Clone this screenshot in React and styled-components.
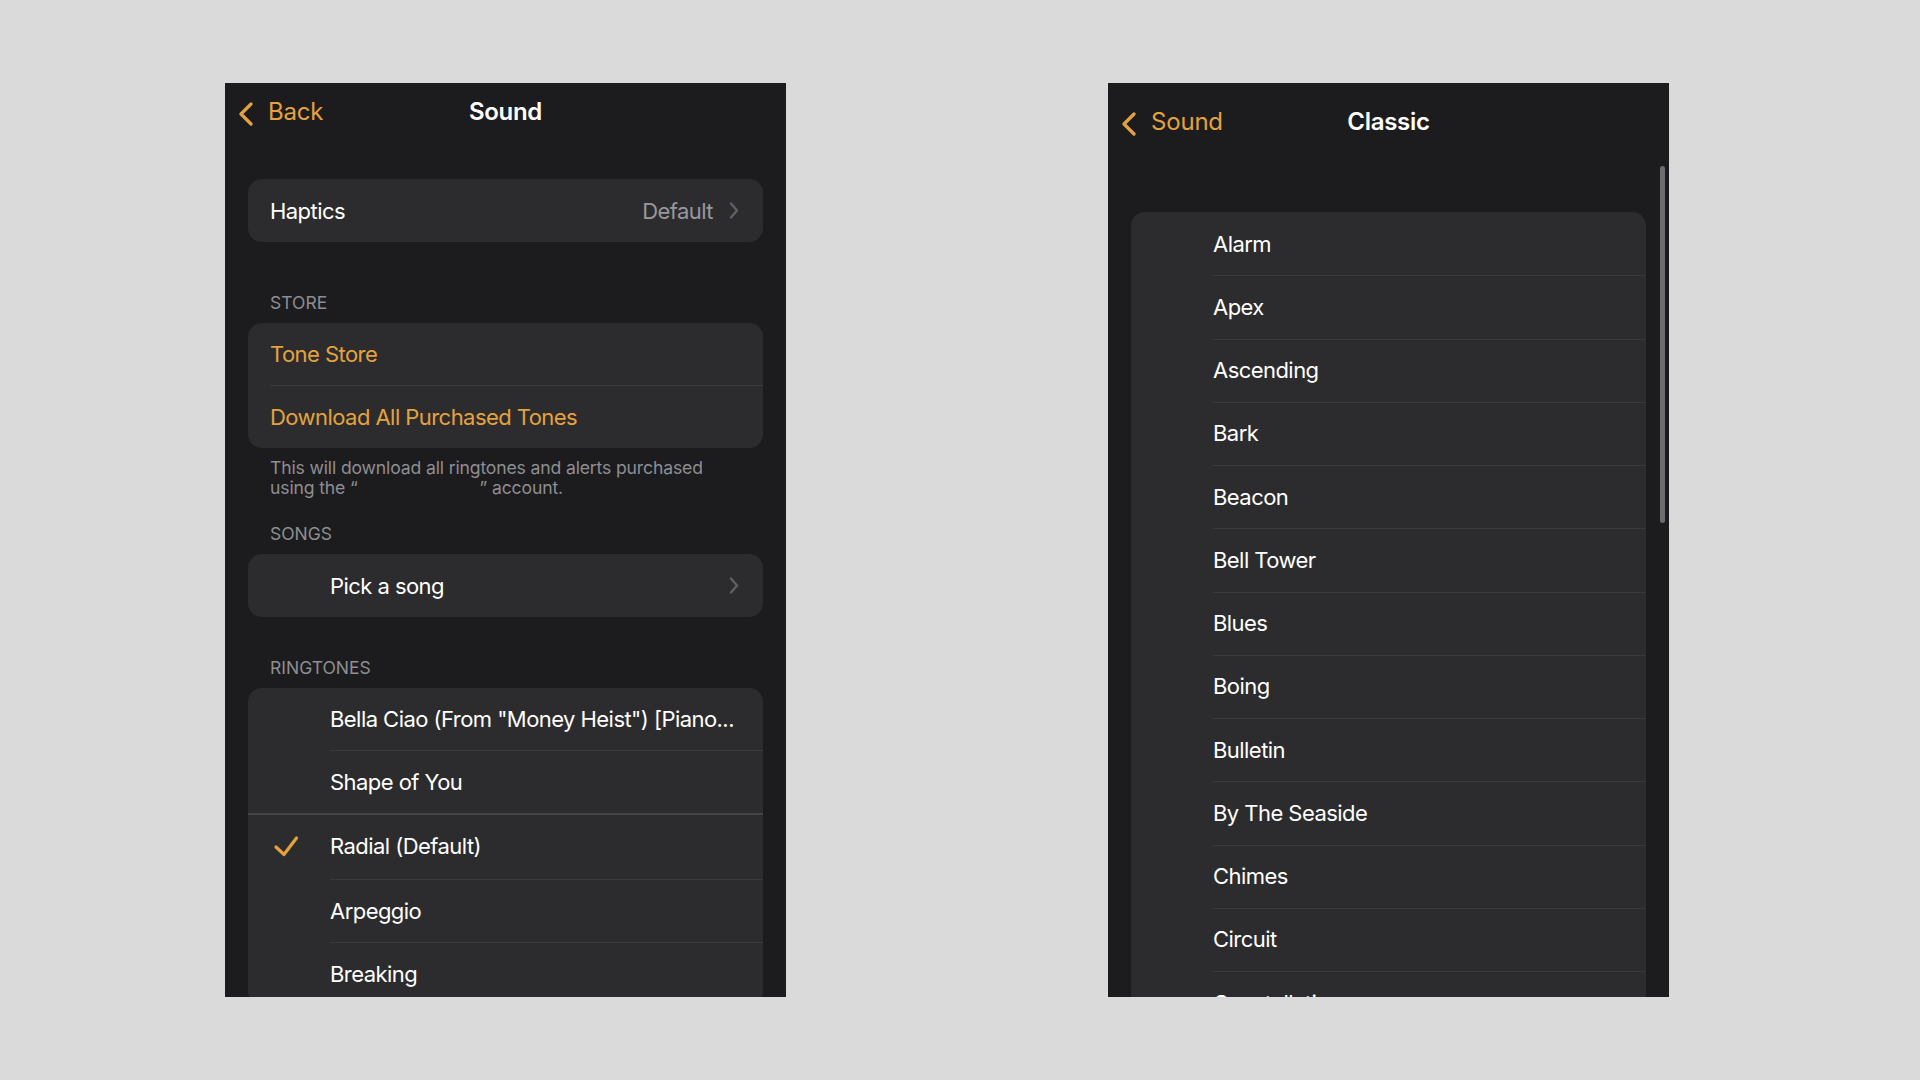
import React from "react";
import styled, { createGlobalStyle } from "styled-components";

const ORANGE = "#e4a23e";

const GlobalStyle = createGlobalStyle`
  html, body {
    margin: 0;
    padding: 0;
    background: #dadada;
    font-family: Inter, "Noto Sans", "Liberation Sans", sans-serif;
    -webkit-font-smoothing: antialiased;
  }
  * { box-sizing: border-box; }
`;

const Stage = styled.div`
  display: flex;
  align-items: flex-start;
  gap: 322px;
  padding: 83px 0 0 225px;
  min-height: 1080px;
`;

const Phone = styled.div`
  position: relative;
  width: 561px;
  height: 914px;
  background: #1c1c1e;
  overflow: hidden;
  display: flex;
  flex-direction: column;
`;

const NavBar = styled.div`
  flex: none;
  height: ${(p) => p.$height}px;
  display: grid;
  grid-template-columns: 1fr auto 1fr;
  align-items: center;
  padding: 0 13px;
`;

const BackButton = styled.div`
  display: flex;
  align-items: center;
  gap: 14px;
  color: ${ORANGE};
  font-size: 24px;
  letter-spacing: -0.2px;
  svg { margin-top: 6px; }
`;

const Title = styled.div`
  color: #ffffff;
  font-size: 24px;
  font-weight: 600;
  letter-spacing: -0.3px;
`;

const Content = styled.div`
  display: flex;
  flex-direction: column;
  padding: 0 23px;
`;

const Card = styled.div`
  margin-top: ${(p) => p.$top || 0}px;
  background: #2c2c2e;
  border-radius: 14px;
  overflow: hidden;
  display: flex;
  flex-direction: column;
`;

const Row = styled.div`
  position: relative;
  flex: none;
  height: ${(p) => p.$h || 63}px;
  display: flex;
  align-items: center;
  padding: 0 24px 0 ${(p) => p.$pad || 22}px;
  &::before {
    content: "";
    display: ${(p) => (p.$divider ? "block" : "none")};
    position: absolute;
    top: 0;
    right: 0;
    left: ${(p) => (p.$divider === "full" ? 0 : p.$lineLeft || 22)}px;
    height: ${(p) => (p.$divider === "full" ? 2 : 1)}px;
    background: ${(p) => (p.$divider === "full" ? "#454448" : "#3a3a3c")};
  }
`;

const CheckSlot = styled.div`
  width: 60px;
  flex: none;
  display: flex;
  align-items: center;
  padding-left: 3px;
`;

const Label = styled.span`
  flex: 1;
  min-width: 0;
  font-size: 22px;
  letter-spacing: -0.55px;
  color: ${(p) => (p.$accent ? ORANGE : "#ffffff")};
  white-space: nowrap;
`;

const Detail = styled.span`
  font-size: 22px;
  letter-spacing: -0.55px;
  color: #98989e;
  margin-right: 16px;
`;

const SectionHeader = styled.div`
  margin-top: ${(p) => p.$top}px;
  margin-bottom: ${(p) => p.$bottom}px;
  padding-left: 22px;
  height: 20px;
  line-height: 20px;
  font-size: 17.5px;
  color: #8e8e93;
  text-transform: uppercase;
`;

const Footer = styled.div`
  margin-top: 10px;
  padding-left: 22px;
  font-size: 17.6px;
  line-height: 20px;
  letter-spacing: -0.15px;
  color: #8e8e93;
`;

const Redacted = styled.span`
  display: inline-block;
  width: 122px;
`;

const Scrollbar = styled.div`
  position: absolute;
  left: 552px;
  top: 83px;
  width: 5px;
  height: 357px;
  border-radius: 3px;
  background: #6d6d71;
`;

const BackChevron = () => (
  <svg width="16" height="24" viewBox="0 0 16 24" fill="none">
    <path d="M13 2 L3 12 L13 22" stroke={ORANGE} strokeWidth="3.2" strokeLinecap="round" strokeLinejoin="round" />
  </svg>
);

const Disclosure = () => (
  <svg width="10" height="17" viewBox="0 0 10 17" fill="none">
    <path d="M2 1.5 L8 8.5 L2 15.5" stroke="#5f5f64" strokeWidth="2.4" strokeLinecap="round" strokeLinejoin="round" />
  </svg>
);

const Check = () => (
  <svg width="26" height="22" viewBox="0 0 26 22" fill="none">
    <path d="M3 12 L11 19.5 L23.5 3" stroke={ORANGE} strokeWidth="3.2" strokeLinecap="round" strokeLinejoin="round" />
  </svg>
);

const Nav = ({ back, title, height }) => (
  <NavBar $height={height}>
    <BackButton>
      <BackChevron />
      {back}
    </BackButton>
    <Title>{title}</Title>
    <div />
  </NavBar>
);

const ringtones = [
  { name: 'Bella Ciao (From "Money Heist") [Piano...', h: 62 },
  { name: "Shape of You", h: 63, divider: true },
  { name: "Radial (Default)", h: 66, checked: true, divider: "full" },
  { name: "Arpeggio", h: 63, divider: true },
  { name: "Breaking", h: 63, divider: true },
];

const classic = [
  "Alarm",
  "Apex",
  "Ascending",
  "Bark",
  "Beacon",
  "Bell Tower",
  "Blues",
  "Boing",
  "Bulletin",
  "By The Seaside",
  "Chimes",
  "Circuit",
  "Constellation",
];

const SoundScreen = () => (
  <Phone>
    <Nav back="Back" title="Sound" height={56} />
    <Content>
      <Card $top={40}>
        <Row>
          <Label>Haptics</Label>
          <Detail>Default</Detail>
          <Disclosure />
        </Row>
      </Card>

      <SectionHeader $top={51} $bottom={10}>Store</SectionHeader>
      <Card>
        <Row $h={62}>
          <Label $accent>Tone Store</Label>
        </Row>
        <Row $h={63} $divider>
          <Label $accent>Download All Purchased Tones</Label>
        </Row>
      </Card>
      <Footer>
        This will download all ringtones and alerts purchased
        <br />
        using the “<Redacted />” account.
      </Footer>

      <SectionHeader $top={26} $bottom={10}>Songs</SectionHeader>
      <Card>
        <Row>
          <CheckSlot />
          <Label>Pick a song</Label>
          <Disclosure />
        </Row>
      </Card>

      <SectionHeader $top={41} $bottom={10}>Ringtones</SectionHeader>
      <Card>
        {ringtones.map((r) => (
          <Row key={r.name} $h={r.h} $divider={r.divider} $lineLeft={82}>
            <CheckSlot>{r.checked ? <Check /> : null}</CheckSlot>
            <Label>{r.name}</Label>
          </Row>
        ))}
      </Card>
    </Content>
  </Phone>
);

const ClassicScreen = () => (
  <Phone>
    <Nav back="Sound" title="Classic" height={76} />
    <Content>
      <Card $top={53}>
        {classic.map((name, i) => (
          <Row key={name} $h={63.25} $pad={82} $lineLeft={82} $divider={i > 0}>
            <Label>{name}</Label>
          </Row>
        ))}
      </Card>
    </Content>
    <Scrollbar />
  </Phone>
);

export default function App() {
  return (
    <>
      <GlobalStyle />
      <Stage>
        <SoundScreen />
        <ClassicScreen />
      </Stage>
    </>
  );
}
